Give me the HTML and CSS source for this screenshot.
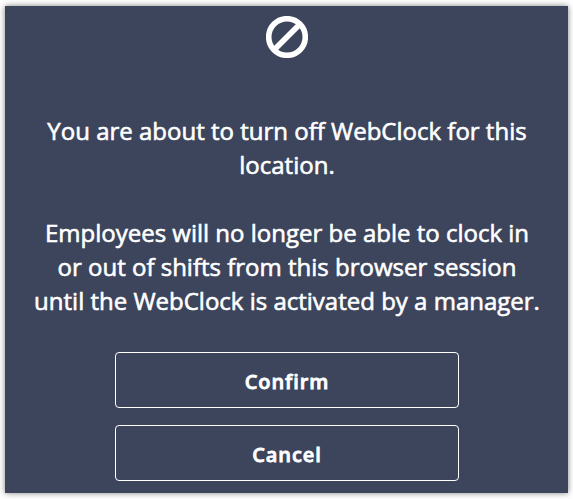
FILE: index.html
```
<!DOCTYPE html>
<html lang="en">
<head>
  <meta charset="UTF-8">
  <meta name="viewport" content="width=device-width, initial-scale=1.0">
  <title>Turn off WebClock</title>
  <link rel="stylesheet" href="styles.css">
</head>
<body>
  <div class="modal">
    <svg class="modal-icon" viewBox="0 0 42 42">
      <circle cx="21" cy="21" r="18.3"></circle>
      <line x1="8.5" y1="33.5" x2="33.5" y2="8.5"></line>
    </svg>
    <div class="message">
      <p>You are about to turn off WebClock for this<br>location.</p>
      <p>Employees will no longer be able to clock in<br>or out of shifts from this browser session<br>until the WebClock is activated by a manager.</p>
    </div>
    <div class="buttons">
      <button type="button" class="btn">Confirm</button>
      <button type="button" class="btn">Cancel</button>
    </div>
  </div>
</body>
</html>
```

FILE: styles.css
```
* {
  box-sizing: border-box;
}

body {
  margin: 0;
  padding: 6px 5px;
  background-color: #ffffff;
  font-family: "Open Sans", "Noto Sans", sans-serif;
}

.modal {
  display: flex;
  flex-direction: column;
  align-items: center;
  width: 563px;
  height: 487px;
  padding-top: 10px;
  background-color: #3c455c;
  color: #ffffff;
  box-shadow: 0 0 6px rgba(0, 0, 0, 0.5);
}

.modal-icon {
  width: 42px;
  height: 42px;
  fill: none;
  stroke: #ffffff;
  stroke-width: 5.6;
}

.message {
  margin-top: 56px;
  padding-left: 1px;
  font-size: 24px;
  line-height: 34px;
  text-align: center;
  white-space: nowrap;
  -webkit-text-stroke: 0.6px #ffffff;
}

.message p {
  margin: 0 0 34px;
}

.buttons {
  display: flex;
  flex-direction: column;
  gap: 17px;
}

.btn {
  width: 344px;
  height: 56px;
  padding: 2px 0 0 1px;
  border: 1px solid #ffffff;
  border-radius: 4px;
  background: none;
  color: #ffffff;
  font-family: inherit;
  font-size: 20px;
  font-weight: 600;
  letter-spacing: 0.9px;
  -webkit-text-stroke: 0.8px #ffffff;
}
```
